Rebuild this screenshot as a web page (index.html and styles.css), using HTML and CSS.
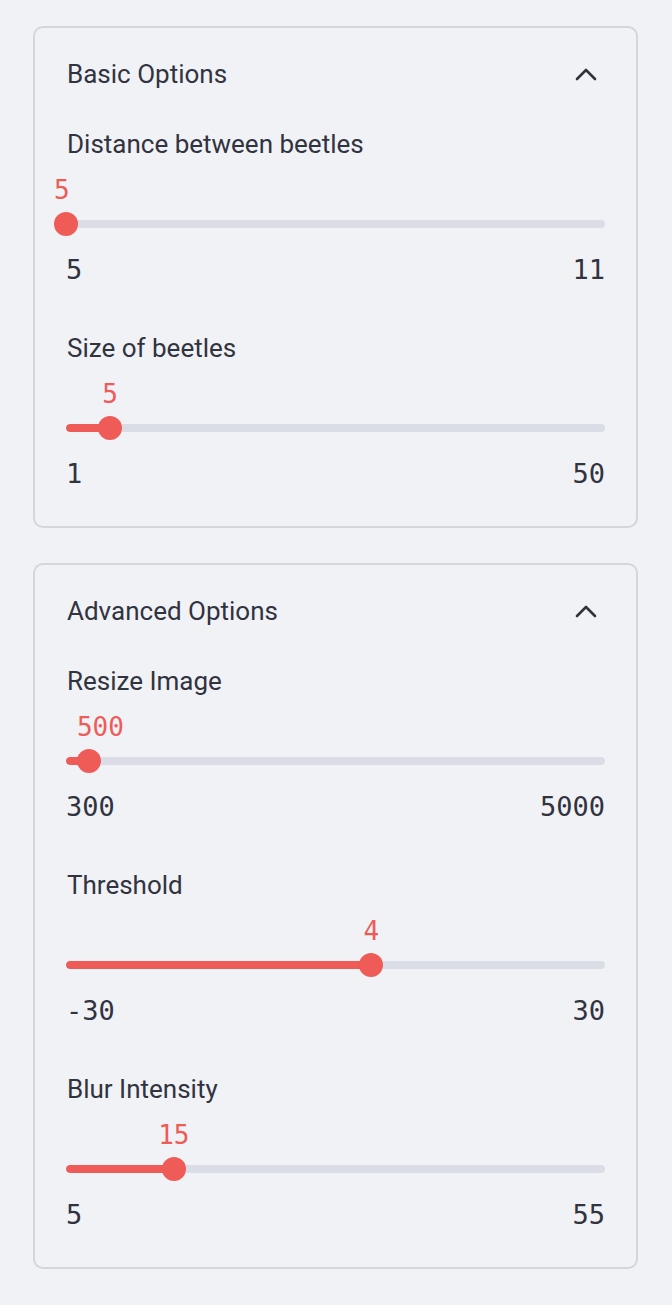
FILE: index.html
```html
<!DOCTYPE html>
<html lang="en">
<head>
<meta charset="utf-8">
<title>Options</title>
<link rel="stylesheet" href="styles.css">
</head>
<body>
<div class="sidebar">
  <section class="expander">
    <div class="exp-header">
      <span class="exp-title">Basic Options</span>
      <svg class="chevron" width="22" height="14" viewBox="0 0 22 14"><polyline points="2,12 11,3 20,12" fill="none" stroke="#31333f" stroke-width="2.6" stroke-linecap="round" stroke-linejoin="round"/></svg>
    </div>
    <div class="exp-body">
      <div class="field">
        <div class="label">Distance between beetles</div>
        <div class="slider">
          <div class="track"><div class="fill" style="width:0%"></div></div>
          <div class="thumb" style="left:0%"><span class="value start">5</span></div>
        </div>
        <div class="ticks"><span>5</span><span>11</span></div>
      </div>
      <div class="field">
        <div class="label">Size of beetles</div>
        <div class="slider">
          <div class="track"><div class="fill" style="width:8.163%"></div></div>
          <div class="thumb" style="left:8.163%"><span class="value">5</span></div>
        </div>
        <div class="ticks"><span>1</span><span>50</span></div>
      </div>
    </div>
  </section>
  <section class="expander">
    <div class="exp-header">
      <span class="exp-title">Advanced Options</span>
      <svg class="chevron" width="22" height="14" viewBox="0 0 22 14"><polyline points="2,12 11,3 20,12" fill="none" stroke="#31333f" stroke-width="2.6" stroke-linecap="round" stroke-linejoin="round"/></svg>
    </div>
    <div class="exp-body">
      <div class="field">
        <div class="label">Resize Image</div>
        <div class="slider">
          <div class="track"><div class="fill" style="width:4.255%"></div></div>
          <div class="thumb" style="left:4.255%"><span class="value start">500</span></div>
        </div>
        <div class="ticks"><span>300</span><span>5000</span></div>
      </div>
      <div class="field">
        <div class="label">Threshold</div>
        <div class="slider">
          <div class="track"><div class="fill" style="width:56.667%"></div></div>
          <div class="thumb" style="left:56.667%"><span class="value">4</span></div>
        </div>
        <div class="ticks"><span>-30</span><span>30</span></div>
      </div>
      <div class="field">
        <div class="label">Blur Intensity</div>
        <div class="slider">
          <div class="track"><div class="fill" style="width:20%"></div></div>
          <div class="thumb" style="left:20%"><span class="value">15</span></div>
        </div>
        <div class="ticks"><span>5</span><span>55</span></div>
      </div>
    </div>
  </section>
</div>
</body>
</html>
```
FILE: styles.css
```css
html, body {
  margin: 0;
  padding: 0;
  background: #f0f2f6;
}
body {
  font-family: Roboto, "Liberation Sans", sans-serif;
  color: #31333f;
}
.sidebar {
  display: flex;
  flex-direction: column;
  gap: 35px;
  padding: 26px 34px 37px 33px;
}
.expander {
  border: 2px solid #d5d6da;
  border-radius: 10px;
}
.exp-header {
  display: flex;
  justify-content: space-between;
  align-items: center;
  height: 40px;
  padding: 26px 39px 0 32px;
  font-size: 26px;
}
.chevron {
  display: block;
}
.exp-body {
  padding: 30px 31px 32px 31px;
}
.field + .field {
  margin-top: 38px;
}
.label {
  height: 40px;
  line-height: 40px;
  font-size: 26px;
  padding-left: 1px;
}
.slider {
  position: relative;
  height: 80px;
}
.track {
  position: absolute;
  left: 0;
  right: 0;
  top: 56px;
  height: 8px;
  border-radius: 4px;
  background: #dadde5;
  overflow: hidden;
}
.fill {
  height: 100%;
  background: #ef5b57;
  border-radius: 4px;
}
.thumb {
  position: absolute;
  top: 48px;
  width: 24px;
  height: 24px;
  margin-left: -12px;
  border-radius: 50%;
  background: #ef5b57;
}
.value {
  position: absolute;
  top: -38px;
  left: 50%;
  transform: translateX(-50%);
  line-height: 32px;
  font-family: "DejaVu Sans Mono", "Liberation Mono", monospace;
  font-size: 26px;
  color: #ef5b57;
  white-space: nowrap;
}
.value.start {
  left: 0;
  transform: none;
}
.ticks {
  display: flex;
  justify-content: space-between;
  margin-top: 6px;
  height: 40px;
  line-height: 40px;
  font-family: "DejaVu Sans Mono", "Liberation Mono", monospace;
  font-size: 27px;
}
```
